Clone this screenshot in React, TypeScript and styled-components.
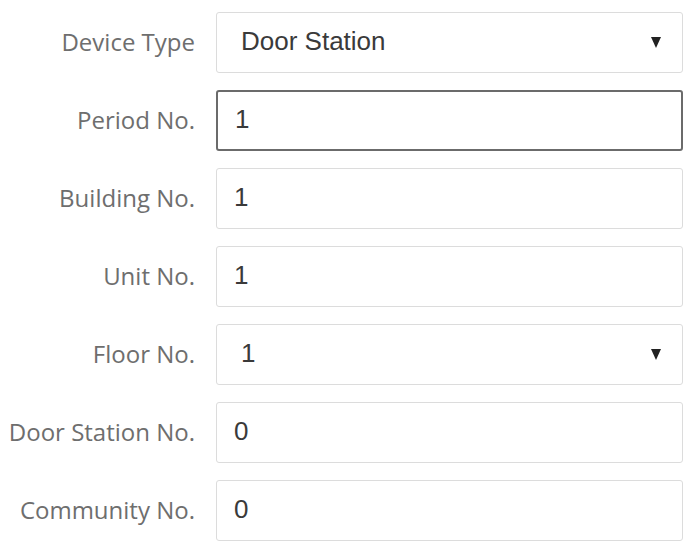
import styled, { createGlobalStyle } from "styled-components";

const GlobalStyle = createGlobalStyle`
  body {
    margin: 0;
    background: #ffffff;
  }
`;

type Field = {
  label: string;
  value: string;
  kind: "select" | "text";
  focused?: boolean;
};

const fields: Field[] = [
  { label: "Device Type", value: "Door Station", kind: "select" },
  { label: "Period No.", value: "1", kind: "text", focused: true },
  { label: "Building No.", value: "1", kind: "text" },
  { label: "Unit No.", value: "1", kind: "text" },
  { label: "Floor No.", value: "1", kind: "select" },
  { label: "Door Station No.", value: "0", kind: "text" },
  { label: "Community No.", value: "0", kind: "text" },
];

const App = () => {
  return (
    <>
      <GlobalStyle />
      <Form>
        {fields.map((field) => (
          <Row key={field.label}>
            <Label>{field.label}</Label>
            <Box $focused={field.focused} $select={field.kind === "select"}>
              <Value>{field.value}</Value>
              {field.kind === "select" && <Caret />}
            </Box>
          </Row>
        ))}
      </Form>
    </>
  );
};

export default App;

const Form = styled.div`
  display: grid;
  grid-gap: 17px;
  padding: 12px 4px 0 0;
  width: 683px;
`;

const Row = styled.div`
  display: grid;
  grid-template-columns: 195px 467px;
  grid-gap: 21px;
  align-items: center;
`;

const Label = styled.div`
  text-align: right;
  font-family: "Open Sans", "Noto Sans", sans-serif;
  font-size: 24px;
  color: #6e6e6e;
  white-space: nowrap;
  margin-top: -2px;
`;

const Box = styled.div<{ $focused?: boolean; $select?: boolean }>`
  box-sizing: border-box;
  height: 61px;
  display: flex;
  align-items: center;
  justify-content: space-between;
  padding: 0 21px 0 ${(p) => (p.$select ? "24px" : "17px")};
  border: ${(p) => (p.$focused ? "2px solid #6b6b6b" : "1px solid #dcdcdc")};
  border-radius: 3px;
  background: #ffffff;
`;

const Value = styled.span`
  font-family: "Liberation Sans", Arial, sans-serif;
  font-size: 26px;
  color: #3a3a3a;
  margin-top: -2px;
`;

const Caret = styled.span`
  width: 0;
  height: 0;
  border-left: 5px solid transparent;
  border-right: 5px solid transparent;
  border-top: 11px solid #222222;
`;
